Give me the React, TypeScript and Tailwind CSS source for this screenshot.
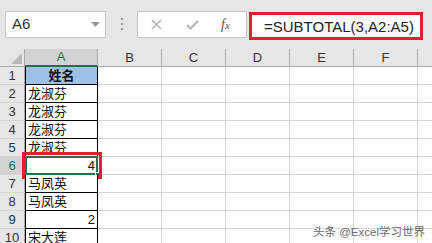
import React from "react";

const COLS = ["A", "B", "C", "D", "E", "F", ""];

const ROWS: { a: string; align: "left" | "right" | "center" }[] = [
  { a: "姓名", align: "center" },
  { a: "龙淑芬", align: "left" },
  { a: "龙淑芬", align: "left" },
  { a: "龙淑芬", align: "left" },
  { a: "龙淑芬", align: "left" },
  { a: "4", align: "right" },
  { a: "马凤英", align: "left" },
  { a: "马凤英", align: "left" },
  { a: "2", align: "right" },
  { a: "宋大莲", align: "left" },
];

const font = "font-['Liberation_Sans','Noto_Sans_CJK_SC',sans-serif]";

function TopBar() {
  return (
    <div className="flex h-[49px] items-start bg-[#e6e6e6] pt-[11px]">
      <div className="ml-[5px] flex h-[27px] w-[101px] items-center justify-between border border-[#c6c6c6] bg-white pl-[6px] pr-[5px]">
        <span className="text-[15px] text-[#333]">A6</span>
        <svg width="9" height="5" viewBox="0 0 9 5">
          <path d="M0 0 L9 0 L4.5 5 Z" fill="#9a9a9a" />
        </svg>
      </div>
      <div className="ml-[15px] mr-[14px] mt-[7px] flex flex-col gap-[3px]">
        <span className="h-[2px] w-[2px] bg-[#9a9a9a]" />
        <span className="h-[2px] w-[2px] bg-[#9a9a9a]" />
        <span className="h-[2px] w-[2px] bg-[#9a9a9a]" />
      </div>
      <div className="flex h-[27px] w-[110px] items-center border border-[#c6c6c6] bg-white">
        <svg className="ml-[13px]" width="11" height="11" viewBox="0 0 11 11">
          <path d="M1 1 L10 10 M10 1 L1 10" stroke="#b4b4b4" strokeWidth="1.6" />
        </svg>
        <svg className="ml-[24px]" width="13" height="10" viewBox="0 0 13 10">
          <path d="M1 5 L4.5 8.5 L12 1" stroke="#b4b4b4" strokeWidth="2" fill="none" />
        </svg>
        <span className="ml-[22px] font-['Liberation_Serif',serif] text-[14px] italic text-[#555]">
          f<span className="text-[11px]">x</span>
        </span>
      </div>
      <div className="ml-[2px] mt-[1px] flex h-[28px] w-[174px] items-center border-[3px] border-[#e5202b] bg-white pl-[12px]">
        <span className="text-[15px] leading-none text-[#222]">=SUBTOTAL(3,A2:A5)</span>
      </div>
    </div>
  );
}

function HeaderRow() {
  return (
    <div className="flex h-[18px]">
      <div className="relative h-[18px] w-[25px] shrink-0 border-b border-r border-[#ababab] bg-[#e6e6e6]">
        <svg className="absolute bottom-[2px] right-[2px]" width="11" height="11" viewBox="0 0 11 11">
          <path d="M11 0 L11 11 L0 11 Z" fill="#b8b8b8" />
        </svg>
      </div>
      {COLS.map((c, i) => {
        const sel = c === "A";
        return (
          <div
            key={i}
            className={
              sel
                ? "flex h-[18px] w-[73px] shrink-0 items-center justify-center border-b-2 border-r border-b-[#217346] border-r-[#ababab] bg-[#d2d2d2] text-[13px] text-[#217346]"
                : "flex h-[18px] w-[64px] shrink-0 items-center justify-center border-b border-r border-[#ababab] bg-[#e6e6e6] text-[13px] text-[#333]"
            }
          >
            {c}
          </div>
        );
      })}
    </div>
  );
}

function Row({ n, a, align }: { n: number; a: string; align: "left" | "right" | "center" }) {
  const sel = n === 6;
  const head = n === 1;
  return (
    <div className="flex h-[18px]">
      <div
        className={
          sel
            ? "flex h-[18px] w-[25px] shrink-0 items-center justify-center border-b border-r border-b-[#d4d4d4] border-r-[#217346] bg-[#d2d2d2] text-[13px] text-[#217346]"
            : "flex h-[18px] w-[25px] shrink-0 items-center justify-center border-b border-r border-b-[#d4d4d4] border-r-[#ababab] bg-[#e6e6e6] text-[13px] text-[#333]"
        }
      >
        {n}
      </div>
      <div
        className={
          "relative flex h-[18px] w-[73px] shrink-0 items-center border-x border-b border-black px-[2px] text-[13px] leading-none text-[#111] " +
          (align === "center" ? "justify-center font-bold " : align === "right" ? "justify-end " : "justify-start ") +
          (head ? "bg-[#9bc2e6]" : "bg-white")
        }
      >
        <span>{a}</span>
        {sel && (
          <>
            <div className="absolute -inset-[1px] border-2 border-[#217346]" />
            <div className="absolute -bottom-[3px] -right-[3px] h-[5px] w-[5px] border border-white bg-[#217346]" />
            <div className="absolute -bottom-[5px] -left-[4px] -right-[5px] -top-[5px] border-[3px] border-[#e5202b]" />
          </>
        )}
      </div>
      {COLS.slice(1).map((c, i) => (
        <div key={i} className="h-[18px] w-[64px] shrink-0 border-b border-r border-[#d4d4d4] bg-white" />
      ))}
    </div>
  );
}

export default function App() {
  return (
    <div className={`relative h-[243px] w-[432px] overflow-hidden bg-white ${font}`}>
      <TopBar />
      <HeaderRow />
      {ROWS.map((r, i) => (
        <Row key={i} n={i + 1} a={r.a} align={r.align} />
      ))}
      <div className="absolute bottom-[5px] right-[7px] text-[11.5px] leading-none text-[#6a6a6a] [text-shadow:0_0_2px_#fff]">
        头条 @Excel学习世界
      </div>
    </div>
  );
}
